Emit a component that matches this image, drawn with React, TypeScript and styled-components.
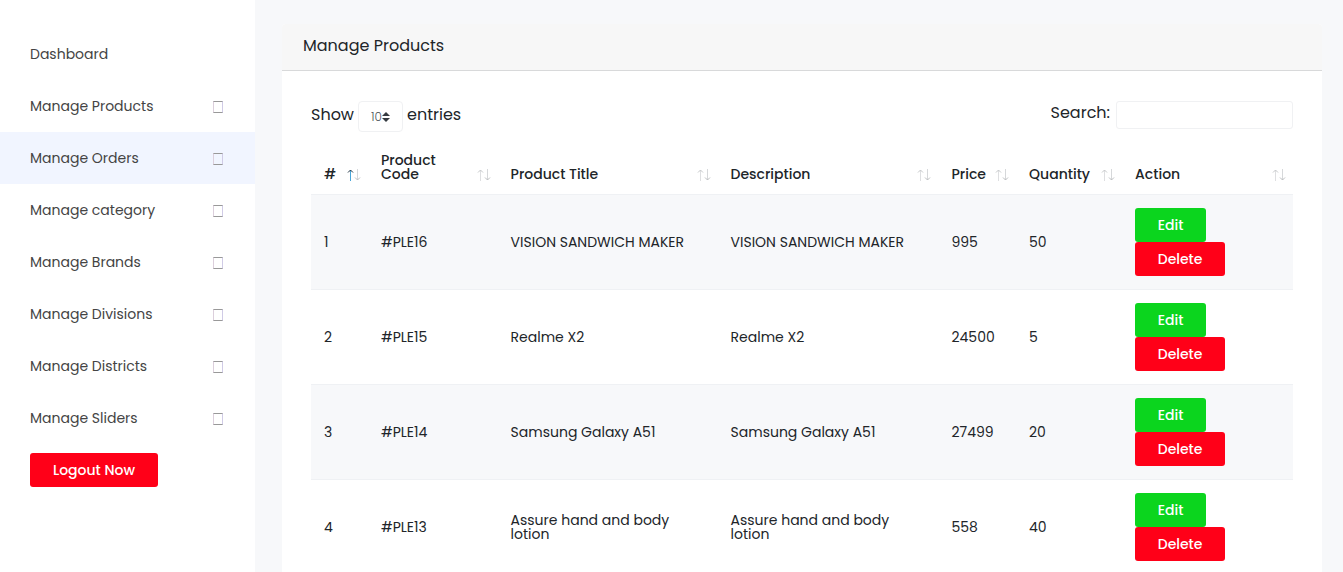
import React from 'react';
import styled, { createGlobalStyle } from 'styled-components';

const GlobalStyle = createGlobalStyle`
  *, *::before, *::after { box-sizing: border-box; }
  body {
    margin: 0;
    background: #f7f8fa;
    color: #212529;
    font-family: Poppins, Inter, "Liberation Sans", sans-serif;
    font-size: 14px;
    font-weight: 400;
  }
  button, input, select { font: inherit; }
`;

const Shell = styled.div`
  display: flex;
  height: 100vh;
`;

const Sidebar = styled.aside`
  flex: 0 0 255px;
  background: #fff;
  padding-top: 28px;
  overflow: hidden;
`;

const NavList = styled.ul`
  list-style: none;
  margin: 0;
  padding: 0;
`;

const NavLink = styled.a<{ $active?: boolean }>`
  display: flex;
  align-items: center;
  justify-content: space-between;
  height: 52px;
  padding: 0 32px 0 30px;
  background: ${(p) => (p.$active ? '#f1f5ff' : 'transparent')};
  color: #444;
  font-size: 14px;
  text-decoration: none;
`;

const MissingGlyph = styled.span`
  width: 10px;
  height: 12px;
  margin-top: 2px;
  border: 1px solid;
  border-color: #999 #d0cbe6 #999 #dccfdc;
`;

const Button = styled.button<{ $tone: 'success' | 'danger'; $width: number }>`
  width: ${(p) => p.$width}px;
  height: 34px;
  padding: 0;
  border: 0;
  border-radius: 3px;
  background: ${(p) => (p.$tone === 'success' ? '#0bd51e' : '#ff0018')};
  color: #fff;
  font-size: 14px;
  font-weight: 500;
  cursor: pointer;
`;

const LogoutArea = styled.div`
  padding: 9px 30px;
`;

const Main = styled.main`
  flex: 1;
  min-width: 0;
  padding: 24px 21px 24px 27px;
  overflow-y: auto;
  scrollbar-width: none;
`;

const Card = styled.section`
  background: #fff;
  border-radius: 4px;
`;

const CardHeader = styled.header`
  height: 47px;
  padding: 0 21px;
  border-bottom: 1px solid #d8d9da;
  border-radius: 4px 4px 0 0;
  background: #f7f7f7;
  font-size: 16px;
  line-height: 44px;
`;

const CardBody = styled.div`
  padding: 30px 29px;
`;

const Toolbar = styled.div`
  display: flex;
  align-items: flex-start;
  justify-content: space-between;
  height: 39px;
  font-size: 16px;
`;

const Length = styled.label`
  display: flex;
  align-items: flex-start;
  gap: 4px;
  line-height: 28px;
`;

const SelectBox = styled.span`
  position: relative;
  display: block;
`;

const Select = styled.select`
  display: block;
  appearance: none;
  width: 45px;
  height: 31px;
  padding: 0 0 0 12px;
  border: 1px solid #f0f1f3;
  border-radius: 4px;
  background: #fff;
  color: #495057;
  font-size: 12px;
  font-weight: 300;
`;

const SelectArrows = styled.svg`
  position: absolute;
  top: 11px;
  right: 13px;
  pointer-events: none;
`;

const Search = styled.label`
  display: flex;
  align-items: flex-start;
  gap: 6px;
  line-height: 24px;
`;

const SearchInput = styled.input`
  width: 177px;
  height: 28px;
  padding: 4px 8px;
  border: 1px solid #f0f1f3;
  border-radius: 3px;
  background: #fff;
  font-size: 14px;
`;

const Table = styled.table`
  width: 100%;
  table-layout: fixed;
  border-collapse: separate;
  border-spacing: 0;
  line-height: 14px;
`;

const Col = styled.col<{ $share: number }>`
  width: ${(p) => p.$share}%;
`;

const HeadCell = styled.th`
  height: 53px;
  padding: 13px;
  text-align: left;
  vertical-align: bottom;
  font-weight: 500;
`;

const HeadContent = styled.div`
  display: flex;
  align-items: flex-end;
  justify-content: space-between;
  margin-right: -6px;
`;

const HeadLabel = styled.span<{ $narrow?: boolean }>`
  width: ${(p) => (p.$narrow ? '64px' : 'auto')};
`;

const Row = styled.tr`
  &:nth-child(odd) { background: #f7f8fa; }
`;

const Cell = styled.td`
  padding: 13px;
  border-top: 1px solid #eff1f4;
  vertical-align: middle;
`;

const Actions = styled.div`
  display: flex;
  flex-direction: column;
  align-items: flex-start;
`;

const SortIcon = ({ ascending }: { ascending?: boolean }) => (
  <svg width="14" height="12" viewBox="0 0 14 12" fill="none" aria-hidden="true">
    <path d="M3.5 12V1" stroke={ascending ? '#4aa6d8' : '#dedfe1'} />
    <path d="M1 3.5L3.5 1L6 3.5" stroke={ascending ? '#1f3444' : '#c6c8ca'} />
    <path d="M10.5 0V11" stroke="#d6d8da" />
    <path d="M8 8.500L10.500 11L13 8.500" stroke="#bcbec0" />
  </svg>
);

const menu = [
  'Dashboard', 'Manage Products', 'Manage Orders', 'Manage category',
  'Manage Brands', 'Manage Divisions', 'Manage Districts', 'Manage Sliders',
];

const columns = [
  { label: '#', share: 5.8 },
  { label: 'Product Code', share: 13.2 },
  { label: 'Product Title', share: 22.4 },
  { label: 'Description', share: 22.5 },
  { label: 'Price', share: 7.9 },
  { label: 'Quantity', share: 10.8 },
  { label: 'Action', share: 17.4 },
];

const products = [
  { code: '#PLE16', title: 'VISION SANDWICH MAKER', price: 995, quantity: 50 },
  { code: '#PLE15', title: 'Realme X2', price: 24500, quantity: 5 },
  { code: '#PLE14', title: 'Samsung Galaxy A51', price: 27499, quantity: 20 },
  { code: '#PLE13', title: 'Assure hand and body lotion', price: 558, quantity: 40 },
];

export default function App() {
  return (
    <>
      <GlobalStyle />
      <Shell>
        <Sidebar>
          <nav>
            <NavList>
              {menu.map((item) => (
                <li key={item}>
                  <NavLink href="#" $active={item === 'Manage Orders'}>
                    {item}
                    {item !== 'Dashboard' && <MissingGlyph aria-hidden="true" />}
                  </NavLink>
                </li>
              ))}
            </NavList>
          </nav>
          <LogoutArea>
            <Button type="button" $tone="danger" $width={128}>Logout Now</Button>
          </LogoutArea>
        </Sidebar>
        <Main>
          <Card>
            <CardHeader>Manage Products</CardHeader>
            <CardBody>
              <Toolbar>
                <Length htmlFor="length">
                  Show
                  <SelectBox>
                    <Select id="length" defaultValue="10">
                      <option>10</option>
                      <option>25</option>
                      <option>50</option>
                      <option>100</option>
                    </Select>
                    <SelectArrows width="8" height="10" viewBox="0 0 8 10" aria-hidden="true">
                      <path d="M0 4L4 0L8 4ZM0 6L4 10L8 6Z" fill="#343a40" />
                    </SelectArrows>
                  </SelectBox>
                  entries
                </Length>
                <Search htmlFor="search">
                  Search:
                  <SearchInput id="search" type="search" />
                </Search>
              </Toolbar>
              <Table>
                <colgroup>
                  {columns.map((c) => <Col key={c.label} $share={c.share} />)}
                </colgroup>
                <thead>
                  <tr>
                    {columns.map((c, i) => (
                      <HeadCell key={c.label} scope="col">
                        <HeadContent>
                          <HeadLabel $narrow={i === 1}>{c.label}</HeadLabel>
                          <SortIcon ascending={i === 0} />
                        </HeadContent>
                      </HeadCell>
                    ))}
                  </tr>
                </thead>
                <tbody>
                  {products.map((p, i) => (
                    <Row key={p.code}>
                      <Cell>{i + 1}</Cell>
                      <Cell>{p.code}</Cell>
                      <Cell>{p.title}</Cell>
                      <Cell>{p.title}</Cell>
                      <Cell>{p.price}</Cell>
                      <Cell>{p.quantity}</Cell>
                      <Cell>
                        <Actions>
                          <Button type="button" $tone="success" $width={71}>Edit</Button>
                          <Button type="button" $tone="danger" $width={90}>Delete</Button>
                        </Actions>
                      </Cell>
                    </Row>
                  ))}
                </tbody>
              </Table>
            </CardBody>
          </Card>
        </Main>
      </Shell>
    </>
  );
}
